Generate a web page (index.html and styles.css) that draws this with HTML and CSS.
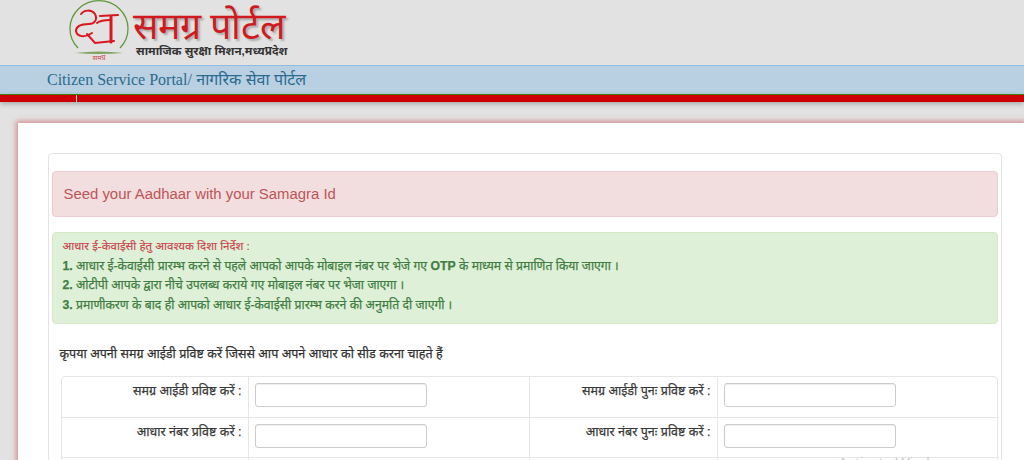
FILE: index.html
```html
<!DOCTYPE html>
<html lang="hi">
<head>
    <meta charset="UTF-8">
    <meta name="viewport" content="width=device-width, initial-scale=1.0">
    <title>Samagra Portal</title>
    <link rel="stylesheet" href="styles.css">
</head>
<body>
    <header class="top">
        <svg class="logo-mark" width="62" height="62" viewBox="0 0 62 62" fill="none">
            <path d="M9 48 A29 28 0 1 1 51 48" stroke="#5f9a3c" stroke-width="1.3"/>
            <path d="M6 53 Q30 50 54 53 Q30 55 6 53 Z" fill="#7fa35c"/>
            <g stroke="#d8181e" stroke-width="2" stroke-linecap="round">
                <path d="M12 14 C15 10 22 9 26 14 C29 20 25 24 20 24 C14 24 7 25 7 31 C8 37 16 38 23 33"/>
                <path d="M18 34 L26 43 L45 41"/>
                <path d="M31 16 L49 15"/>
                <path d="M42 17 L42 42" stroke-width="3"/>
                <path d="M28 23 C32 20 37 20 41 20"/>
            </g>
            <text class="logo-small" x="30" y="60" text-anchor="middle">समग्र</text>
        </svg>
        <div class="brand">
            <div class="brand-name">समग्र पोर्टल</div>
            <div class="brand-sub">सामाजिक सुरक्षा मिशन,मध्यप्रदेश</div>
        </div>
    </header>

    <div class="title-bar">
        <span class="title-en">Citizen Service Portal/</span>
        <span class="title-hi">नागरिक सेवा पोर्टल</span>
    </div>
    <div class="red-bar"><span class="red-tick"></span></div>

    <main class="sheet">
        <div class="panel">
            <div class="alert alert-red">Seed your Aadhaar with your Samagra Id</div>

            <div class="alert alert-green">
                <div class="note-head">आधार ई-केवाईसी हेतु आवश्यक दिशा निर्देश :</div>
                <div class="note-line"><b>1.</b> आधार ई-केवाईसी प्रारम्भ करने से पहले आपको आपके मोबाइल नंबर पर भेजे गए <b>OTP</b> के माध्यम से प्रमाणित किया जाएगा ।</div>
                <div class="note-line"><b>2.</b> ओटीपी आपके द्वारा नीचे उपलब्ध कराये गए मोबाइल नंबर पर भेजा जाएगा ।</div>
                <div class="note-line"><b>3.</b> प्रमाणीकरण के बाद ही आपको आधार ई-केवाईसी प्रारम्भ करने की अनुमति दी जाएगी ।</div>
            </div>

            <p class="intro">कृपया अपनी समग्र आईडी प्रविष्ट करें जिससे आप अपने आधार को सीड करना चाहते हैं</p>

            <div class="form-table">
                <label class="cell cell-label">समग्र आईडी प्रविष्ट करें :</label>
                <div class="cell"><input class="field" type="text"></div>
                <label class="cell cell-label">समग्र आईडी पुनः प्रविष्ट करें :</label>
                <div class="cell"><input class="field" type="text"></div>

                <label class="cell cell-label">आधार नंबर प्रविष्ट करें :</label>
                <div class="cell"><input class="field" type="text"></div>
                <label class="cell cell-label">आधार नंबर पुनः प्रविष्ट करें :</label>
                <div class="cell"><input class="field" type="text"></div>

                <div class="cell cell-empty"></div>
                <div class="cell cell-empty"></div>
                <div class="cell cell-empty"></div>
                <div class="cell cell-empty"></div>
            </div>
        </div>
    </main>

    <div class="watermark">Activate Windows</div>
</body>
</html>
```

FILE: styles.css
```css
html, body {
    height: 460px;
    overflow: hidden;
}
body {
    margin: 0;
    background: #e2e2e2;
    font-family: "Liberation Sans", "Noto Sans", sans-serif;
    color: #333;
}
.top {
    height: 65px;
    display: flex;
    padding-left: 69px;
    box-sizing: border-box;
}
.logo-mark {
    flex: none;
}
.logo-small {
    font-size: 7px;
    fill: #c9474f;
}
.brand {
    margin-left: 2px;
}
.brand-name {
    font-family: "Liberation Serif", serif;
    font-size: 37.6px;
    line-height: 34px;
    margin-top: 10px;
    color: #cf1a1f;
    text-shadow: 2px 2px 2px #aaa;
}
.brand-sub {
    font-size: 11.7px;
    line-height: 14px;
    font-weight: bold;
    color: #333;
    margin-left: 3px;
}
.title-bar {
    height: 28px;
    border-top: 1px solid #8fbce0;
    background: #b8d0e2;
    padding-left: 47px;
    font-size: 16px;
    line-height: 27px;
    color: #2c6a8e;
}
.title-en {
    font-family: "Liberation Serif", serif;
}
.red-bar {
    height: 7px;
    border-top: 1px solid #3f8000;
    background: #cc0000;
    box-shadow: 0 2px 5px rgba(0, 0, 0, 0.25);
    padding-left: 76px;
}
.red-tick {
    display: block;
    width: 1px;
    height: 7px;
    background: #e8e8e8;
}
.sheet {
    margin: 21px 0 0 18px;
    padding: 30px 22px 0 29.5px;
    background: #fff;
    box-shadow: 0 0 5px 2px rgba(205, 90, 100, 0.6);
    height: 400px;
}
.panel {
    border: 1px solid #e3e3e3;
    border-radius: 4px;
    padding: 17px 3px 0 3px;
    height: 400px;
    box-shadow: 0 1px 1px rgba(0, 0, 0, 0.05);
}
.alert {
    border-radius: 4px;
    border: 1px solid transparent;
    box-sizing: border-box;
}
.alert-red {
    height: 46px;
    padding-left: 11px;
    background: #f2dede;
    border-color: #ebccd1;
    color: #bd5558;
    font-size: 14.9px;
    line-height: 44px;
}
.alert-green {
    height: 92px;
    margin-top: 15px;
    padding: 4px 10px;
    background: #dff0d8;
    border-color: #d6e9c6;
    color: #427e43;
    font-size: 12.2px;
    line-height: 19.5px;
    -webkit-text-stroke: 0.25px #427e43;
}
.note-head {
    color: #c9474f;
    font-size: 11.5px;
    -webkit-text-stroke: 0.15px #c9474f;
}
.intro {
    margin: 20px 0 0 8px;
    font-size: 12.5px;
    line-height: 20px;
    color: #333;
    -webkit-text-stroke: 0.25px #333;
}
.form-table {
    margin: 12px 0 0 9px;
    display: grid;
    grid-template-columns: 187px 281px 188px 281px;
    grid-template-rows: 41px 40px 40px;
    border: 1px solid #e6e6e6;
    border-radius: 4px;
}
.cell {
    box-sizing: border-box;
    padding: 6px 6px;
    border-right: 1px solid #e6e6e6;
    border-bottom: 1px solid #e6e6e6;
}
.cell:nth-child(4n) {
    border-right: 0;
}
.cell-label {
    text-align: right;
    font-size: 12.5px;
    line-height: 16px;
    color: #3a3a3a;
    -webkit-text-stroke: 0.25px #3a3a3a;
}
.field {
    display: block;
    width: 172px;
    height: 24px;
    box-sizing: border-box;
    border: 1px solid #ccc;
    border-radius: 3px;
    background: #fff;
    box-shadow: inset 0 1px 1px rgba(0, 0, 0, 0.075);
}
.watermark {
    position: absolute;
    left: 838px;
    top: 454px;
    font-size: 15px;
    color: #c8c8c8;
}
```
